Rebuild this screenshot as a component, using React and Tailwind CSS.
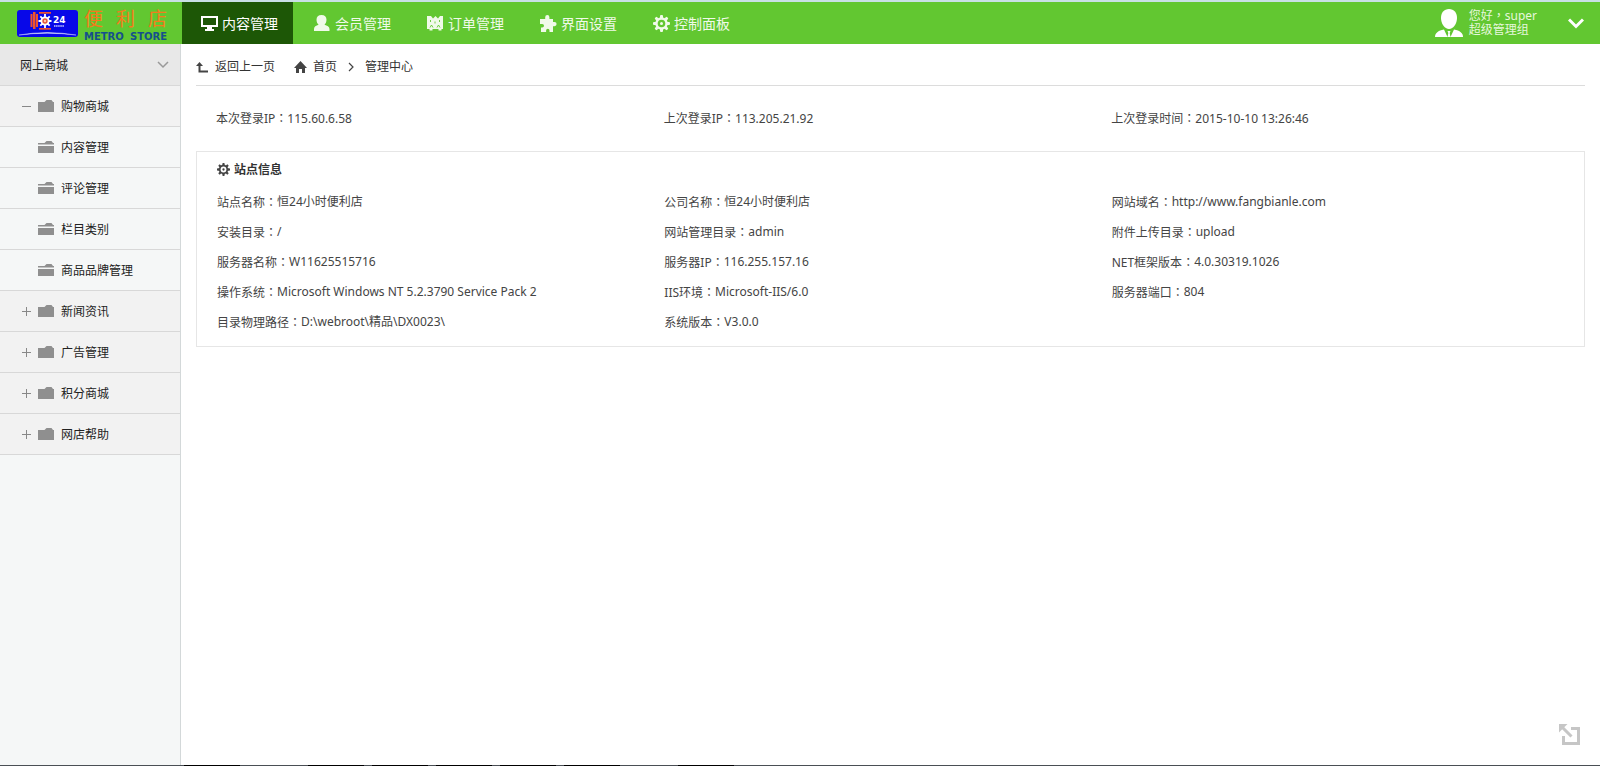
import React, { useState } from 'react';

const TABS = [
  { name: '内容管理', icon: 'monitor' },
  { name: '会员管理', icon: 'user' },
  { name: '订单管理', icon: 'order' },
  { name: '界面设置', icon: 'puzzle' },
  { name: '控制面板', icon: 'gear' },
];

const MENU = [
  { name: '购物商城', children: ['内容管理', '评论管理', '栏目类别', '商品品牌管理'] },
  { name: '新闻资讯', children: [] },
  { name: '广告管理', children: [] },
  { name: '积分商城', children: [] },
  { name: '网店帮助', children: [] },
];

const LOGIN_INFO = [
  ['本次登录IP', '115.60.6.58'],
  ['上次登录IP', '113.205.21.92'],
  ['上次登录时间', '2015-10-10 13:26:46'],
];

const SITE_INFO = [
  ['站点名称', '恒24小时便利店'],
  ['公司名称', '恒24小时便利店'],
  ['网站域名', 'http://www.fangbianle.com'],
  ['安装目录', '/'],
  ['网站管理目录', 'admin'],
  ['附件上传目录', 'upload'],
  ['服务器名称', 'W11625515716'],
  ['服务器IP', '116.255.157.16'],
  ['NET框架版本', '4.0.30319.1026'],
  ['操作系统', 'Microsoft Windows NT 5.2.3790 Service Pack 2'],
  ['IIS环境', 'Microsoft-IIS/6.0'],
  ['服务器端口', '804'],
  ['目录物理路径', 'D:\\webroot\\精品\\DX0023\\'],
  ['系统版本', 'V3.0.0'],
];

function GearShape() {
  return (
    <g fill="currentColor">
      <rect x="7" y="0" width="3" height="17" rx="1" />
      <rect x="7" y="0" width="3" height="17" rx="1" transform="rotate(45 8.5 8.5)" />
      <rect x="7" y="0" width="3" height="17" rx="1" transform="rotate(90 8.5 8.5)" />
      <rect x="7" y="0" width="3" height="17" rx="1" transform="rotate(135 8.5 8.5)" />
      <circle cx="8.5" cy="8.5" r="6.2" />
    </g>
  );
}

function TabIcon({ type }) {
  return (
    <svg className="h-[17px] w-[17px] shrink-0" viewBox="0 0 17 17" fill="currentColor" aria-hidden="true">
      {type === 'monitor' && (
        <path d="M0 1h17v11h-6v2h2v2H4v-2h2v-2H0zM2 3v7h13V3z" fillRule="evenodd" />
      )}
      {type === 'user' && (
        <path d="M7.500 0c3.200 0 5 2 5 4.800 0 2.200-.9 3.800-2 5 2.600.6 5 2.200 5 4.200V16H0v-2c0-2 2-3.600 4.600-4.200-1.200-1.200-2.100-2.800-2.100-5C2.500 2 4.300 0 7.500 0z" />
      )}
      {type === 'order' && (
        <>
          <path d="M0 1h4l2 2.500L8.500 1 11 3.500 13 1h3v13h-1.500v1.500h-3V14h-6v1.500h-3V14H0z" />
          <path
            d="M3.500 5v2M8 6.500v2M12.500 5v2M3 12.500l1.500-2.500 1.500 2.500M10 12.500l1.500-2.500 1.500 2.500"
            fill="none"
            stroke="#62c731"
            strokeWidth=".9"
          />
        </>
      )}
      {type === 'puzzle' && (
        <path d="M5.200 4V2.200a2 2 0 0 1 4.200 0V4H13v3h1.500a2 2 0 0 1 0 4.200H13V17H9.500v-1.500a1.700 1.700 0 0 0-3.400 0V17H1v-4.500h1.200a1.800 1.800 0 0 0 0-3.600H0V4z" />
      )}
      {type === 'gear' && (
        <>
          <GearShape />
          <circle cx="8.500" cy="8.500" r="3.800" fill="#62c731" />
          <circle cx="8.500" cy="8.500" r="1.500" />
        </>
      )}
    </svg>
  );
}

function Logo() {
  return (
    <a href="#" className="flex w-[182px] shrink-0 items-center gap-1.5 pl-[17px]">
      <svg className="h-[27px] w-[61px] shrink-0" viewBox="0 0 61 27" role="img" aria-label="恒24">
        <rect width="61" height="27" rx="3" fill="#0808e8" />
        <path d="M2 25Q30 20 59 25Q30 21.500 2 25z" fill="#fff" stroke="#dfe6ff" strokeWidth=".4" />
        <g fill="#f0522d">
          <rect x="16" y="2" width="2.500" height="17" />
          <rect x="13.500" y="4" width="2" height="13" />
          <rect x="19" y="4" width="2" height="13" />
          <rect x="22" y="2" width="12" height="1.700" />
          <rect x="22" y="18" width="12" height="1.700" />
        </g>
        <g stroke="#fff" strokeWidth="1.800">
          <path d="M28 4v14M21.500 11h13M23.300 6.300l9.400 9.400M32.700 6.300l-9.400 9.400" />
        </g>
        <circle cx="28" cy="11" r="4.500" fill="#fff" />
        <circle cx="28" cy="11" r="2.700" fill="#e4573a" />
        <circle cx="28" cy="11" r="1.200" fill="#ffc9a8" />
        <text x="36" y="13" fontSize="9" fontWeight="700" fill="#fff" fontFamily="DejaVu Sans">24</text>
        <path d="M37 16h10.500" stroke="#c9ccff" strokeWidth="1.500" strokeDasharray="1.500 .6" />
      </svg>
      <span className="flex w-[83px] flex-col pt-1">
        <span className="flex justify-between text-[19px] leading-6 text-[#f57a1c]">
          <span>便</span>
          <span>利</span>
          <span>店</span>
        </span>
        <span className="flex justify-between font-['DejaVu_Sans',sans-serif] text-[10px] leading-3 font-bold text-[#15508c]">
          <span>METRO</span>
          <span>STORE</span>
        </span>
      </span>
    </a>
  );
}

function Folder({ open }) {
  return (
    <svg className="h-3 w-4 shrink-0 text-[#8f8f8f]" viewBox="0 0 16 12" fill="currentColor" aria-hidden="true">
      {open ? (
        <path d="M0 2h6.500L8.500 0h5L15 2h1v1.500H0zM0 5h16v7H0z" />
      ) : (
        <path d="M0 2h6.500L8.500 0h5L15 2h1v10H0z" />
      )}
    </svg>
  );
}

// 全角标点居中显示
function Punct({ children }) {
  return (
    <span lang="zh-TW" className="font-['Noto_Sans_CJK_TC',sans-serif]">
      {children}
    </span>
  );
}

function InfoItem({ item, height }) {
  return (
    <div className={`flex items-center whitespace-nowrap ${height}`}>
      <dt>{item[0]}<Punct>：</Punct></dt>
      <dd>{item[1]}</dd>
    </div>
  );
}

export default function App() {
  const [tab, setTab] = useState('内容管理');
  const [opened, setOpened] = useState('购物商城');

  return (
    <div
      lang="zh-CN"
      className="relative flex min-h-screen flex-col border-t-2 border-[#c9e0e6] bg-white font-['Noto_Sans','Noto_Sans_CJK_SC',sans-serif] text-xs text-[#444]"
    >
      {/* 顶部导航 */}
      <header className="flex h-[42px] shrink-0 bg-[#62c731] text-white">
        <Logo />
        <nav className="flex gap-0.5">
          {TABS.map((t) => (
            <button
              key={t.name}
              type="button"
              onClick={() => setTab(t.name)}
              className={`flex items-center gap-1 pr-[15px] pl-[19px] text-sm ${tab === t.name ? 'bg-[#1d5706]' : 'text-[#f0fae9]'}`}
            >
              <TabIcon type={t.icon} />
              <span className="pt-0.5">{t.name}</span>
            </button>
          ))}
        </nav>
        <div className="ml-auto flex items-center pr-4">
          <svg className="h-7 w-7" viewBox="0 0 28 28" fill="#fff" aria-hidden="true">
            <path d="M14 0c5 0 8 3.500 8 9s-3.500 11-8 11S6 14.500 6 9s3-9 8-9z" />
            <path d="M0 28c0-4 3-6.500 9-7.500l3.500 7.500zM28 28c0-4-3-6.500-9-7.500L15.500 28zM12.500 22h3l-.8 2 .8 4h-3l.8-4z" />
          </svg>
          <p className="ml-1.5 pb-0.5 leading-[14px] text-[#e6f7dc]">
            您好<Punct>，</Punct>super
            <br />
            超级管理组
          </p>
          <button type="button" aria-label="展开" className="ml-[31px]">
            <svg className="h-4 w-4" viewBox="0 0 16 16" fill="none" stroke="#fff" strokeWidth="3">
              <path d="M1 4.500l7 7 7-7" />
            </svg>
          </button>
        </div>
      </header>

      <div className="flex grow">
        {/* 左侧菜单 */}
        <aside className="w-[181px] shrink-0 border-r border-[#d3d8d9] bg-[#f5f7f7] text-[#222]">
          <button
            type="button"
            className="flex h-[42px] w-full items-center justify-between border-b border-[#d8d8d8] bg-[#e8e8e8] pr-[11px] pl-5"
          >
            <span className="pt-0.5">网上商城</span>
            <svg className="h-3 w-3" viewBox="0 0 12 12" fill="none" stroke="#999" strokeWidth="1.500">
              <path d="M1 3l5 5 5-5" />
            </svg>
          </button>
          {MENU.map((m) => (
            <div key={m.name}>
              <button
                type="button"
                onClick={() => setOpened(opened === m.name ? '' : m.name)}
                className="flex h-[41px] w-full items-center border-b border-[#d8d8d8] bg-[#f2f2f2] pl-[21px]"
              >
                <svg className="mr-1.5 h-[11px] w-[11px]" viewBox="0 0 11 11" stroke="#888" aria-hidden="true">
                  <path d={opened === m.name ? 'M1 5.500h9' : 'M1 5.500h9M5.500 1v9'} />
                </svg>
                <Folder />
                <span className="ml-[7px] pt-0.5">{m.name}</span>
              </button>
              {opened === m.name &&
                m.children.map((c) => (
                  <a key={c} href="#" className="flex h-[41px] items-center border-b border-[#d8d8d8] pl-[38px]">
                    <Folder open />
                    <span className="ml-[7px] pt-0.5">{c}</span>
                  </a>
                ))}
            </div>
          ))}
        </aside>

        {/* 主内容 */}
        <main className="min-w-0 grow px-[15px]">
          <nav className="flex h-[42px] items-center border-b border-[#dcdcdc] pt-1 text-[#333]">
            <a href="#" className="flex items-center gap-[7px]">
              <svg className="h-3 w-3" viewBox="0 0 12 12" fill="none" aria-hidden="true">
                <path d="M3.500 3v7.500H12" stroke="#444" strokeWidth="2" />
                <path d="M0 5l3.500-4L7 5z" fill="#444" />
              </svg>
              返回上一页
            </a>
            <a href="#" className="ml-[19px] flex items-center gap-1.5">
              <svg className="h-3 w-[13px]" viewBox="0 0 13 12" fill="#444" aria-hidden="true">
                <path d="M6.500 0L13 7h-2v5H8V8H5v4H2V7H0z" />
              </svg>
              首页
            </a>
            <svg className="mx-2.5 h-2.5 w-2" viewBox="0 0 8 10" fill="none" stroke="#444" strokeWidth="1.200" aria-hidden="true">
              <path d="M2 1l4 4-4 4" />
            </svg>
            <span>管理中心</span>
          </nav>

          <dl className="grid grid-cols-3 pr-[26px] pl-5">
            {LOGIN_INFO.map((item) => (
              <InfoItem key={item[0]} item={item} height="h-[65px]" />
            ))}
          </dl>

          <section className="border border-[#e6e6e6] pr-[25px] pb-2.5 pl-5">
            <h2 className="flex h-[34px] items-center gap-1 font-bold text-[#333]">
              <svg className="h-[13px] w-[13px] text-[#444]" viewBox="0 0 17 17" aria-hidden="true">
                <GearShape />
                <circle cx="8.500" cy="8.500" r="3.800" fill="#fff" />
                <circle cx="8.500" cy="8.500" r="1.500" fill="#444" />
              </svg>
              <span className="pt-0.5">站点信息</span>
            </h2>
            <dl className="grid grid-cols-3">
              {SITE_INFO.map((item) => (
                <InfoItem key={item[0]} item={item} height="h-[30px] pt-0.5" />
              ))}
            </dl>
          </section>
        </main>
      </div>

      {/* 右下角切换按钮 */}
      <button type="button" aria-label="切换窗口" className="absolute right-5 bottom-[21px]">
        <svg className="h-[21px] w-[21px]" viewBox="0 0 21 21" fill="none" stroke="#c6c6c6" strokeWidth="3">
          <path d="M12 4.500h7.500v15h-15V12M3 3l9.500 9.500" />
          <path d="M0 0h8.500L0 8.500z" fill="#c6c6c6" stroke="none" />
        </svg>
      </button>

      {/* 底部边线 */}
      <div className="flex h-px shrink-0 gap-2 bg-[#4a4f55] pl-[184px]">
        <span className="mr-[60px] w-14 bg-black" />
        <span className="w-14 bg-black" />
        <span className="w-14 bg-black" />
        <span className="w-14 bg-black" />
        <span className="w-14 bg-black" />
        <span className="mr-[50px] w-14 bg-black" />
        <span className="w-14 bg-black" />
      </div>
    </div>
  );
}
